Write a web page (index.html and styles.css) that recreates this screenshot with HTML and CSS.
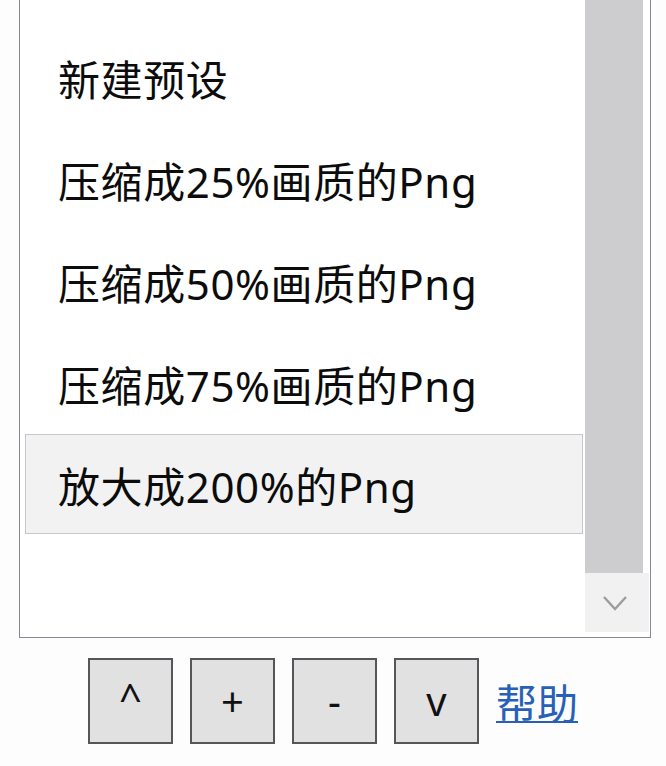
FILE: index.html
```html
<!DOCTYPE html>
<html lang="zh-CN">
<head>
<meta charset="utf-8">
<title>预设</title>
<link rel="stylesheet" href="styles.css">
</head>
<body>
<div class="listbox">
  <div class="items">
    <div class="item">新建预设</div>
    <div class="item">压缩成25%画质的Png</div>
    <div class="item">压缩成50%画质的Png</div>
    <div class="item">压缩成75%画质的Png</div>
    <div class="item selected">放大成200%的Png</div>
  </div>
  <div class="scrollbar">
    <div class="thumb"></div>
    <div class="arrow">
      <svg width="26" height="18" viewBox="0 0 26 18"><path d="M2 3 L13 15 L24 3" fill="none" stroke="#9c9c9e" stroke-width="2.4"/></svg>
    </div>
  </div>
</div>
<div class="toolbar">
  <button class="btn caret">^</button>
  <button class="btn">+</button>
  <button class="btn">-</button>
  <button class="btn">v</button>
  <a class="help" href="#">帮助</a>
</div>
</body>
</html>
```
FILE: styles.css
```css
html, body {
  margin: 0;
  padding: 0;
  background: #fdfdfe;
}
body {
  font-family: "Noto Sans", "Noto Sans CJK SC", sans-serif;
  color: #0c0c0c;
  width: 666px;
  height: 766px;
  overflow: hidden;
}
.listbox {
  margin: -1px 0 0 19px;
  width: 630px;
  height: 637px;
  border: 1px solid #868892;
  background: #fff;
  display: flex;
}
.items {
  width: 565px;
  padding: 27px 0 0 5px;
  box-sizing: border-box;
}
.item {
  width: 558px;
  height: 100px;
  box-sizing: border-box;
  margin-bottom: 2px;
  border: 1px solid transparent;
  padding-left: 32px;
  display: flex;
  align-items: center;
  font-size: 42px;
  letter-spacing: 0.6px;
  white-space: nowrap;
}
.item.selected {
  background: #f2f2f3;
  border-color: #c6c7ca;
  margin-top: -1px;
}
.scrollbar {
  width: 65px;
  display: flex;
  flex-direction: column;
}
.thumb {
  width: 58px;
  height: 573px;
  background: #cdcdcf;
}
.arrow {
  width: 64px;
  height: 59px;
  background: #f1f1f2;
  display: flex;
  align-items: center;
  justify-content: center;
  padding-right: 4px;
  box-sizing: border-box;
}
.toolbar {
  display: flex;
  align-items: center;
  gap: 17px;
  padding: 20px 0 0 88px;
}
.btn {
  width: 85px;
  height: 86px;
  border: 2px solid #555659;
  background: #e1e1e2;
  font-family: "Noto Sans", sans-serif;
  font-size: 40px;
  color: #111;
  padding: 0;
  margin: 0;
  line-height: 1;
}
.btn.caret {
  padding-bottom: 6px;
}
.help {
  font-size: 41px;
  color: #2660b7;
  text-decoration: underline;
  text-underline-offset: 2px;
  text-decoration-thickness: 2px;
  font-family: "Noto Sans CJK SC", sans-serif;
}
```
